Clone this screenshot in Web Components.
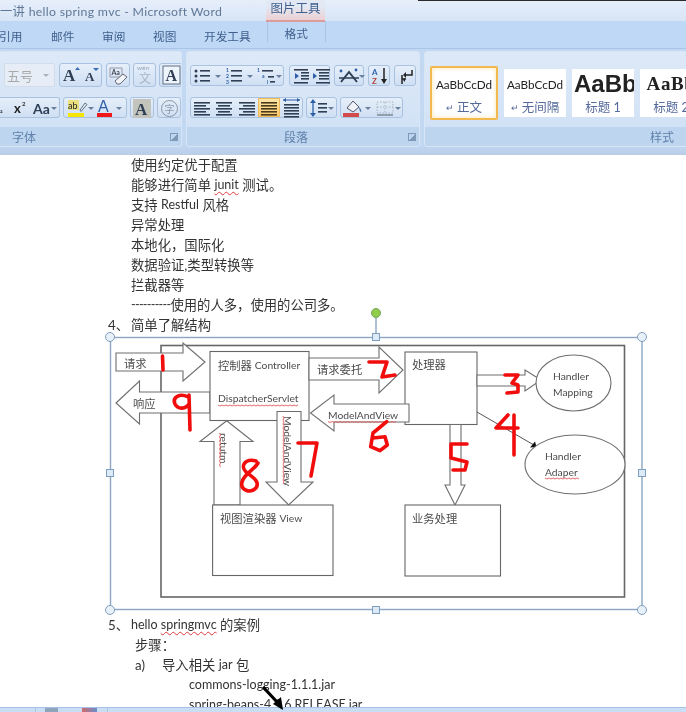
<!DOCTYPE html>
<html><head><meta charset="utf-8"><title>hello spring mvc</title>
<style>html,body{margin:0;padding:0;background:#fff;overflow:hidden}</style></head>
<body>
<word-app>
  <title-bar slot="title"></title-bar>
  <tab-bar slot="tabs"></tab-bar>
  <word-ribbon slot="ribbon"></word-ribbon>
  <word-doc slot="doc"></word-doc>
  <status-bar slot="status"></status-bar>
</word-app>
<script>
const CJK='"Noto Sans CJK SC"';
const UI=`Lato,${CJK},sans-serif`;
function def(name,css,html,extra){
  customElements.define(name,class extends HTMLElement{
    constructor(){super();const r=this.attachShadow({mode:'open'});
      r.innerHTML=`<style>${css}</style>${typeof html==='function'?html(this):html}`;}
    connectedCallback(){ if(extra) extra(this); }
  });
}
def('word-app',`:host{display:flex;flex-direction:column;width:686px;height:712px;overflow:hidden;position:relative;font-family:${UI};filter:blur(.35px)}`,
 `<slot name="title"></slot><slot name="tabs"></slot><slot name="ribbon"></slot><slot name="doc"></slot><slot name="status"></slot>
 <svg style="position:absolute;left:255px;top:680px" width="34" height="32" viewBox="255 680 34 32"><path d="M264 688L277 702" stroke="#000" stroke-width="3.2" stroke-linecap="round"/><path d="M273 704L281 697L283 710Z" fill="#000"/></svg>`);

def('title-bar',`:host{display:flex;height:21px;background:linear-gradient(#e6eefa,#d8e5f6);color:#5f7898;font:12.3px ${UI};flex:none}
 .t{width:266px;white-space:pre;line-height:23px;letter-spacing:.3px;flex:none}
 .c{width:59px;height:22px;flex:none;text-align:center;color:#3f5f8c;font-size:12.5px;line-height:18px;background:linear-gradient(#e2e9f5 30%,#ecd0d3);border-bottom:2px solid #dd9c9c;box-sizing:border-box;position:relative}
 .k{flex:1;margin-left:93px;height:1px;background:#2a2a2a}`,
 `<div class="t">一讲 hello spring mvc - Microsoft Word</div><div class="c">图片工具</div><div class="k"></div>`);

def('tab-bar',`:host{display:flex;height:27px;background:#bfd8f5;color:#3f5f8c;font:11.7px/30px ${UI};flex:none;box-sizing:border-box}
 span{display:block;flex:none}
 .c{margin-left:16px;width:59px;border:solid #a7c3e6;border-width:0 1px;text-align:center;height:21px;line-height:24px;box-sizing:border-box}`,
 `<span style="margin-left:-1px">引用</span><span style="margin-left:28.6px">邮件</span><span style="margin-left:27.6px">审阅</span><span style="margin-left:27.6px">视图</span><span style="margin-left:27.6px">开发工具</span><span class="c">格式</span>`);

def('rb-group',`:host{display:flex;flex-direction:column;height:96px;box-sizing:border-box;flex:none;border:1px solid #d8e5f5;border-radius:3px;background:linear-gradient(#dde9f8,#cfe0f5);overflow:hidden}
 .b{flex:1;min-height:0;display:flex;flex-direction:column;gap:10px;padding-top:10px}
 .f{height:19px;flex:none;background:#bdd5ef;display:flex;align-items:center;justify-content:space-between;color:#5f80aa;font-size:12px;padding:0 3px 0 0;box-sizing:border-box}
 .f span{display:block}
 .d{width:7px;height:7px;border:1px solid #7e98b8;border-width:1px 0 0 1px;position:relative;background:linear-gradient(135deg,transparent 50%,#7e98b8 50%);}`,
 el=>`<div class="b"><slot></slot></div><div class="f"><span style="margin-left:${el.getAttribute('lx')}px">${el.getAttribute('label')}</span>${el.hasAttribute('nod')?'':'<div class="d"></div>'}</div>`);

def('rb-row',`:host{display:flex;height:var(--h,21px);align-items:stretch;flex:none}`,`<slot></slot>`);
def('rb-set',`:host{display:flex;flex:none;border:1px solid #a9c2df;border-radius:3px;background:linear-gradient(#e6effa,#cfdff3);box-sizing:border-box}`,`<slot></slot>`);

const D='#2f3f55',B='#2d5fa8';
const lines=(x,ys,w,c=D,h=1.6)=>ys.map(y=>`<rect x="${x}" y="${y}" width="${w}" height="${h}" fill="${c}"/>`).join('');
const caret=x=>`<path d="M${x} 9h6l-3 3z" fill="#6a7f99"/>`;
const T=(x,y,s,t,f='"Liberation Serif"',c=D,w=700)=>`<text x="${x}" y="${y}" font-family='${f}' font-size="${s}" font-weight="${w}" fill="${c}">${t}</text>`;
const SANS='Lato,"Noto Sans CJK SC"';
const ICON={
 grow:T(3,17,17,'A')+'<path d="M15 6l2.5-3 2.5 3z" fill="#3a6ab0"/>',
 shrink:T(4,17,13,'A')+'<path d="M12 4h6l-3 3z" fill="#3a6ab0"/>',
 clear:`<path d="M3 4h12v9H3z" fill="none" stroke="#99a"/>`+T(4.5,11,7,'Aa',SANS,'#445')+'<path d="M8 17l8-7 4 3-7 7h-3z" fill="#f2f4f8" stroke="#667"/>',
 wen:T(3,6,6.5,'wén',SANS,'#9aa9ba',400)+T(5,19,12,'文',CJK,'#a9b5c3',400),
 abox:`<rect x="3" y="2" width="17" height="18" fill="#eef4fb" stroke="#5c6f86"/>`+T(5.5,17,16,'A'),
 sub:T(1,14,8,'₂',SANS,'#333'),
 sup:T(5,15,13,'x',SANS,'#222')+T(13,8,6,'2',SANS,'#333'),
 aa:T(2,16,14,'Aa',SANS,D)+'<path d="M20 9h6l-3 3z" fill="#6a7f99"/>',
 hi:`<rect x="4" y="2" width="11" height="10" fill="#eedc4a" opacity=".7"/>`+T(4,11,9,'ab',SANS,'#222',400)+`<path d="M16 12l5-7 2 1.5-6 7z" fill="#dfe6f0" stroke="#678"/><rect x="4" y="15" width="16" height="4" fill="#f5e500"/>`+caret(24),
 color:T(2,14,16,'A','"Liberation Sans"','#2e5ea8',400)+`<rect x="1" y="15" width="15" height="4" fill="#f01818"/>`+caret(20),
 shade:`<rect x="2" y="1" width="18" height="19" fill="#c3c4bc"/>`+T(4,17,17,'A'),
 circ:`<circle cx="11.5" cy="10.5" r="8" fill="none" stroke="#8896a6"/>`+T(6.5,14.5,10,'字',CJK,'#8896a6',400),
 bul:`<circle cx="5" cy="5" r="1.5" fill="${D}"/><circle cx="5" cy="10" r="1.5" fill="${D}"/><circle cx="5" cy="15" r="1.5" fill="${D}"/>`+lines(9,[4,9,14],10)+caret(24),
 num:T(3,6,5,'1',SANS,B)+T(3,12,5,'2',SANS,B)+T(3,18,5,'3',SANS,B)+lines(8,[4,9,14],11)+caret(24),
 multi:T(1,6,5,'1',SANS,B)+T(6,12,5,'a',SANS,B)+T(11,18,5,'i',SANS,B)+lines(6,[4],11)+lines(12,[10],6)+lines(14,[15],5)+caret(20),
 outd:`<path d="M9 10l-4-3v6z" fill="${B}"/>`+lines(4,[3,16],14)+lines(11,[6,9,12],8),
 ind:`<path d="M3 7l4 3-4 3z" fill="${B}"/>`+lines(6,[3,16],14)+lines(9,[6,9,12],10),
 asian:`<path d="M6 16L14 6L22 16" fill="none" stroke="${D}" stroke-width="2"/><path d="M4 12h20" stroke="${D}" stroke-width="1.6"/><circle cx="6" cy="5" r="1.4" fill="${B}"/><circle cx="21" cy="4" r="1.4" fill="${B}"/>`+caret(24),
 sort:T(3,8.5,8,'A',SANS,B)+T(3,18,8,'Z',SANS,'#b0433a')+`<path d="M15 2v14" stroke="#222" stroke-width="1.5"/><path d="M12 13l3 5 3-5z" fill="#222"/>`,
 mark:`<path d="M17 4v5h-8" fill="none" stroke="#222" stroke-width="1.5"/><path d="M11 6l-3 3 3 3z" fill="#222"/><path d="M11 13h-4M7 9v9" stroke="#222" stroke-width="1.5"/><path d="M8 14l2-2v4z" fill="#222"/>`,
 left:lines(3,[4,10,16],16)+lines(3,[7,13],12),
 center:lines(3,[4,10,16],16)+lines(5,[7,13],12),
 right:lines(3,[4,10,16],16)+lines(7,[7,13],12),
 just:lines(3,[4,7,10,13,16],16,'#4a3a20'),
 dist:lines(4,[6,9,12,15,18],15)+`<path d="M3 2h17" stroke="${B}"/><path d="M3 2l3-2v4zM20 2l-3-2v4z" fill="${B}"/>`,
 spacing:`<path d="M6 1l-3 4h6zM6 19l-3-4h6z" fill="${B}"/><path d="M6 4v12" stroke="${B}" stroke-width="1.3"/>`+lines(11,[5,9,13],9)+caret(21),
 fill:`<path d="M6 10l6-7 6 6-6 5z" fill="#eef2f8" stroke="#556"/><path d="M18 9c2 2 3 4 2 5-1 0-2-3-2-5z" fill="#4a6fa5"/><rect x="2" y="15" width="16" height="4" fill="#d24a4a"/>`+caret(24),
 border:`<path d="M4 4h16v11H4zM12 4v11M4 9h16" fill="none" stroke="#a9b3bf" stroke-dasharray="1.5 1.5"/><path d="M4 17h16" stroke="#7b8797" stroke-width="1.5"/>`+'<path d="M22 9h6l-3 3z" fill="#6a7f99"/>'
};
def('rb-btn',`:host{display:block;flex:none;height:100%}
 :host([active]){background:linear-gradient(#fde8a8,#fbc766);box-shadow:inset 0 0 0 1px #f0b95c}
 svg{display:block;overflow:visible}`,
 el=>{const w=+el.getAttribute('w')||22;return `<svg width="${w}" height="20" viewBox="0 0 ${w} 20" style="margin-top:${el.getAttribute('mt')||0}px">${ICON[el.getAttribute('i')]||''}</svg>`;});
def('rb-combo',`:host{display:flex;flex:none;align-items:center;justify-content:space-between;border:1px solid #d2dde9;border-radius:2px;background:#e6edf6;color:#a9a9a9;font-size:13px;box-sizing:border-box;padding:0 5px 0 2px}
 i{display:block;border:3px solid transparent;border-top-color:#aab3bd;margin-top:3px}`,`<slot></slot><i></i>`);
def('style-card',`:host{display:flex;flex-direction:column;flex:none;align-items:center;background:#fff;width:62px;height:48px;box-sizing:border-box;overflow:hidden;margin-top:1px}
 :host([sel]){width:68px;height:54px;margin-top:-2px;border:2px solid #f2b94e;border-radius:2px;box-shadow:inset 0 0 4px #fde3a6}
 .s{height:28px;line-height:30px;white-space:nowrap;flex:none;color:#222;font-family:Lato,sans-serif;font-size:11.7px}
 :host([sel]) .s{margin-top:1px}
 .l{color:#55699a;font-size:12.5px;line-height:22px;white-space:nowrap}
 .l small{font-size:9px;vertical-align:1px}`,
 el=>`<div class="s" style="${el.getAttribute('st')||''}">${el.getAttribute('sample')}</div><div class="l">${el.getAttribute('label')}</div>`);

def('word-ribbon',`:host{display:flex;flex:none;height:107px;background:linear-gradient(#c2d8f3 90%,#b9cde6);border-top:1px solid #a9c6e8;box-sizing:border-box;padding-top:2px;gap:4px;overflow:hidden}
 .g{display:flex;gap:6px;padding:6px 0 0 5px}`,
 `<rb-group style="width:183px;margin-left:-1px;border-left:0" label="字体" lx="13">
   <rb-row style="--h:24px;margin-left:5px;margin-top:1px">
    <rb-combo style="width:51px">五号</rb-combo>
    <rb-set style="margin-left:4px"><rb-btn i="grow" w="21"></rb-btn><rb-btn i="shrink" w="20"></rb-btn></rb-set>
    <rb-set style="margin-left:4px"><rb-btn i="clear" w="22"></rb-btn></rb-set>
    <rb-set style="margin-left:3px"><rb-btn i="wen" w="21"></rb-btn></rb-set>
    <rb-set style="margin-left:3px"><rb-btn i="abox" w="22"></rb-btn></rb-set>
   </rb-row>
   <rb-row style="margin-top:0">
    <rb-set style="border-left:0;border-radius:0 3px 3px 0"><rb-btn i="sub" w="10"></rb-btn><rb-btn i="sup" w="22"></rb-btn><rb-btn i="aa" w="28"></rb-btn></rb-set>
    <rb-set style="margin-left:3px"><rb-btn i="hi" w="32"></rb-btn><rb-btn i="color" w="30"></rb-btn></rb-set>
    <rb-set style="margin-left:3px"><rb-btn i="shade" w="22"></rb-btn></rb-set>
    <rb-set style="margin-left:3px"><rb-btn i="circ" w="22"></rb-btn></rb-set>
   </rb-row>
  </rb-group>
  <rb-group style="width:234px" label="段落" lx="97">
   <rb-row style="margin:3px 0 0 3px">
    <rb-set><rb-btn i="bul" w="32"></rb-btn><rb-btn i="num" w="33"></rb-btn><rb-btn i="multi" w="27"></rb-btn></rb-set>
    <rb-set style="margin-left:5px"><rb-btn i="outd" w="20"></rb-btn><rb-btn i="ind" w="19"></rb-btn></rb-set>
    <rb-set style="margin-left:4px"><rb-btn i="asian" w="28"></rb-btn></rb-set>
    <rb-set style="margin-left:4px"><rb-btn i="sort" w="20"></rb-btn></rb-set>
    <rb-set style="margin-left:4px"><rb-btn i="mark" w="20"></rb-btn></rb-set>
   </rb-row>
   <rb-row style="margin:1px 0 0 3px">
    <rb-set><rb-btn i="left"></rb-btn><rb-btn i="center" w="23"></rb-btn><rb-btn i="right"></rb-btn><rb-btn i="just" active></rb-btn><rb-btn i="dist"></rb-btn></rb-set>
    <rb-set style="margin-left:3px"><rb-btn i="spacing" w="29"></rb-btn></rb-set>
    <rb-set style="margin-left:3px"><rb-btn i="fill" w="32"></rb-btn><rb-btn i="border" w="29"></rb-btn></rb-set>
   </rb-row>
  </rb-group>
  <rb-group style="width:270px" label="样式" lx="225" nod>
   <div class="g">
    <style-card sel sample="AaBbCcDd" label="<small>↵</small> 正文"></style-card>
    <style-card sample="AaBbCcDd" label="<small>↵</small> 无间隔"></style-card>
    <style-card sample="AaBb" label="标题 1" st="font:700 24px/30px 'Liberation Sans';width:62px;overflow:hidden;padding-left:2px;box-sizing:border-box"></style-card>
    <style-card sample="AaBb" label="标题 2" st="font:700 19px/30px 'Liberation Serif';letter-spacing:.6px"></style-card>
   </div>
  </rb-group>`);

def('spell-err',`:host{display:inline;text-decoration:underline wavy #dd3b3b 1px;text-underline-offset:2px;text-decoration-skip-ink:none}`,`<slot></slot>`);
def('la-t',`:host{display:inline;font-size:12.5px}`,`<slot></slot>`);
def('doc-line',`:host{display:flex;height:20px;line-height:20px;white-space:pre;font-size:13.33px;color:#333;flex:none}
 b{font-weight:400;display:block;flex:none}`,
 el=>{const m=el.getAttribute('m');return `<b style="width:${el.getAttribute('x')}px"></b>${m?`<b style="width:23px">${m}</b>`:''}<slot></slot>`;});

const wave=(x,y,w,rot)=>{let d='';for(let i=0,n=Math.round(w/2);i<=n;i++){const a=i%2?1:-0;d+=rot?`${i?'L':'M'}${y+a} ${x+i*2} `:`${i?'L':'M'}${x+i*2} ${y+a} `;}return `<path d="${d}" fill="none" stroke="#e25a5a" stroke-width=".9"/>`;};
const box=(x,y,w,h)=>`<rect x="${x}" y="${y}" width="${w}" height="${h}" fill="#fff" stroke="#666" stroke-width="1.1"/>`;
const ar=p=>`<path d="${p}Z" fill="#fff" stroke="#6e6e6e" stroke-width="1.1"/>`;
const tx=(x,y,s,extra='')=>`<text x="${x}" y="${y}" font-size="11.3" fill="#4c4c4c" dominant-baseline="central" ${extra}>${s.replace(/[A-Za-z]+/g,m=>`<tspan font-size="10.3">${m}</tspan>`)}</text>`;
const red=(d)=>`<path d="${d}" fill="none" stroke="#f20d0d" stroke-width="3.6" stroke-linecap="round" stroke-linejoin="round"/>`;
const sq=(x,y)=>`<rect x="${x-3.5}" y="${y-3.5}" width="7" height="7" fill="#dcebf7" stroke="#7f9dbd"/>`;
const ci=(x,y)=>`<circle cx="${x}" cy="${y}" r="4.5" fill="#e9f1f8" stroke="#7f9dbd"/>`;
def('flow-diagram',`:host{display:block;height:280px;flex:none;position:relative}
 svg{display:block;overflow:visible;font-family:${UI}}`,
 `<svg width="686" height="280" viewBox="0 335 686 280">
 <rect x="161" y="345.5" width="463.5" height="251.5" fill="none" stroke="#666" stroke-width="1.6"/>
 ${ar('M116 353H183V343L205 362L183 381V371H116')}
 ${tx(124,363,'请求')}
 ${ar('M116 403L139.5 381V392H210V413H139.5V424')}
 ${tx(133,403,'响应')}
 ${box(210,351.5,99,69)}
 ${tx(218,365,'控制器 Controller')}
 ${tx(218,398,'DispatcherServlet')}${wave(218,405,80)}
 ${ar('M309 358H379V347L403 370L379 393V380H309')}
 ${tx(317,369,'请求委托')}
 ${box(405,352,72,72.5)}
 ${tx(412,364,'处理器')}
 ${ar('M409 404H334V395L310.5 413L334 431V422H409')}
 ${tx(328,415,'ModelAndView')}${wave(328,421.5,68)}
 ${ar('M477 375H525V370L541 380L525 391V386H477')}
 <ellipse cx="573.5" cy="383" rx="37.5" ry="28" fill="#fff" stroke="#6e6e6e" stroke-width="1.1"/>
 ${tx(553,376,'Handler')}${tx(553,392,'Mapping')}
 <path d="M477 412L533 444.5" stroke="#555" stroke-width="1"/><path d="M530 447.5L535 441.5L536.5 447Z" fill="#111"/>
 <ellipse cx="575" cy="464.5" rx="50" ry="29.5" fill="#fff" stroke="#6e6e6e" stroke-width="1.1"/>
 ${tx(545,456,'Handler')}${tx(545,472,'Adaper')}${wave(545,478,33)}
 ${ar('M450 424.5H461V485H465L455 505L445 485H450')}
 ${box(405,505,95.5,71)}
 ${tx(412,518,'业务处理')}
 ${ar('M214 505V441.5H200L226.7 420.7L253 441.5H240V505')}
 ${ar('M277 411.5H301V482H313L288.7 505L266 482H277')}
 ${box(212.6,505,120.4,70.5)}
 ${tx(220,518,'视图渲染器 View')}
 ${tx(224,433,'retutm','transform="rotate(90 224 433)"')}${wave(433,219.5,34,true)}
 ${tx(288,416,'ModelAndView','transform="rotate(90 288 416)"')}${wave(416,283,68,true)}
 ${red('M162.5 356L163 370')}
 ${red('M369 362H387L382 377L395 375')}
 ${red('M505 375H518L512 383L518 385V392L507 393')}
 ${red('M508 415L496 428H518M514 415V455')}
 ${red('M467 444H451V458L467 462L465 470H453')}
 ${red('M386.7 421.7L373 433L370.7 446.7L380 450.7L387.3 445L385 436.7L373 438')}
 ${red('M298 443H317L311 476')}
 ${red('M256 461C245 458 240 466 246 472C254 478 260 482 256 488C250 494 240 490 242 482C244 474 254 470 258 463')}
 ${red('M188 397C180 393 172 397 175 404C178 410 186 409 189 404M189 395L190 430')}
 <rect x="110.5" y="337.5" width="531.5" height="272" fill="none" stroke="#8ba5c4" stroke-width="1.4"/>
 <path d="M376 317V334" stroke="#8ba5c4" stroke-width="1.4"/>
 <circle cx="376" cy="313" r="4.5" fill="#8fce4a" stroke="#76a05e"/>
 ${ci(110,337)}${ci(642,337)}${ci(110,610)}${ci(642,610)}
 ${sq(376,337)}${sq(110,473)}${sq(642,473)}${sq(376,610)}
 </svg>`);

def('word-doc',`:host{display:flex;flex-direction:column;flex:1;min-height:0;overflow:hidden;background:#fff}`,
 `<doc-line x="131">使用约定优于配置</doc-line>
 <doc-line x="131">能够进行简单 <la-t><spell-err>junit</spell-err></la-t> 测试。</doc-line>
 <doc-line x="131">支持 <la-t>Restful</la-t> 风格</doc-line>
 <doc-line x="131">异常处理</doc-line>
 <doc-line x="131">本地化，国际化</doc-line>
 <doc-line x="131">数据验证,类型转换等</doc-line>
 <doc-line x="131">拦截器等</doc-line>
 <doc-line x="131"><la-t style="letter-spacing:-.7px">----------</la-t>使用的人多，使用的公司多。</doc-line>
 <doc-line x="108" m="4、">简单了解结构</doc-line>
 <flow-diagram></flow-diagram>
 <doc-line x="108" m="5、"><la-t>hello <spell-err>springmvc</spell-err></la-t> 的案例</doc-line>
 <doc-line x="135">步骤：</doc-line>
 <doc-line x="135"><span style="display:inline-block;width:27px">a)</span>导入相关 <la-t>jar</la-t> 包</doc-line>
 <doc-line x="189"><la-t>commons-logging-1.1.1.jar</la-t></doc-line>
 <doc-line x="189"><la-t>spring-beans-4.1.6.RELEASE.jar</la-t></doc-line>`);

def('status-bar',`:host{display:flex;height:5px;flex:none;background:#c9def5;border-top:1px solid #a5c3e6;box-sizing:border-box}
 i{display:block;flex:none;height:100%}`,
 `<i style="width:35px;border-right:1px solid #aec6e2"></i><i style="width:9px"></i><i style="width:13px;background:#8ea4bd"></i><i style="width:24px"></i><i style="width:15px;background:linear-gradient(90deg,#d06a6a,#6a8ed0)"></i><i style="width:10px;border-right:1px solid #aec6e2"></i>`);
</script>
</body></html>
